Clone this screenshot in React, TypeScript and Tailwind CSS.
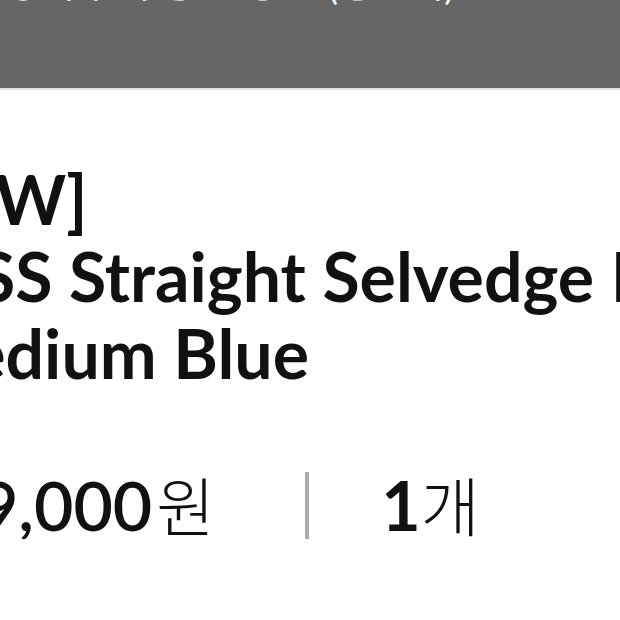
import React from 'react';

const OrderItem: React.FC = () => {
  return (
    <div className="bg-white">
      {/* product name, zoomed in past the start of each line */}
      <h2 className="pt-[70px] font-['Lato',sans-serif] font-bold text-[68px] leading-[77px] text-[#111] whitespace-nowrap overflow-hidden">
        <span className="block -ml-[118px]">[NEW]</span>
        <span className="block -ml-[101px]">24SS Straight Selvedge Denim</span>
        <span className="block -ml-[94px]">Medium Blue</span>
      </h2>

      <div className="mt-[80px] flex items-center whitespace-nowrap overflow-hidden">
        <div className="-ml-[100px] flex items-baseline gap-[4px]">
          <span className="font-['Lato',sans-serif] font-semibold text-[68px] leading-none text-[#111]">189,000</span>
          <span className="font-['Noto_Sans_CJK_KR',sans-serif] font-light text-[64px] leading-none text-[#111]">원</span>
        </div>
        <div className="ml-[90px] w-[4px] h-[67px] bg-[#aaa]" />
        <div className="ml-[72px] flex items-baseline">
          <span className="font-['Lato',sans-serif] font-bold text-[68px] leading-none text-[#111]">1</span>
          <span className="font-['Noto_Sans_CJK_KR',sans-serif] font-light text-[64px] leading-none text-[#111]">개</span>
        </div>
      </div>
    </div>
  );
};

export default function App() {
  return (
    <div className="w-[620px] h-[620px] overflow-hidden bg-white">
      <header className="h-[90px] bg-[#666] border-b-2 border-[#e2e2e2] overflow-hidden">
        <p className="-mt-[40px] pl-[4px] font-['Noto_Sans_CJK_KR',sans-serif] text-[40px] leading-[40px] text-white whitespace-nowrap">
          장바구니 상품 정보 (총 1개)
        </p>
      </header>
      <OrderItem />
    </div>
  );
}
